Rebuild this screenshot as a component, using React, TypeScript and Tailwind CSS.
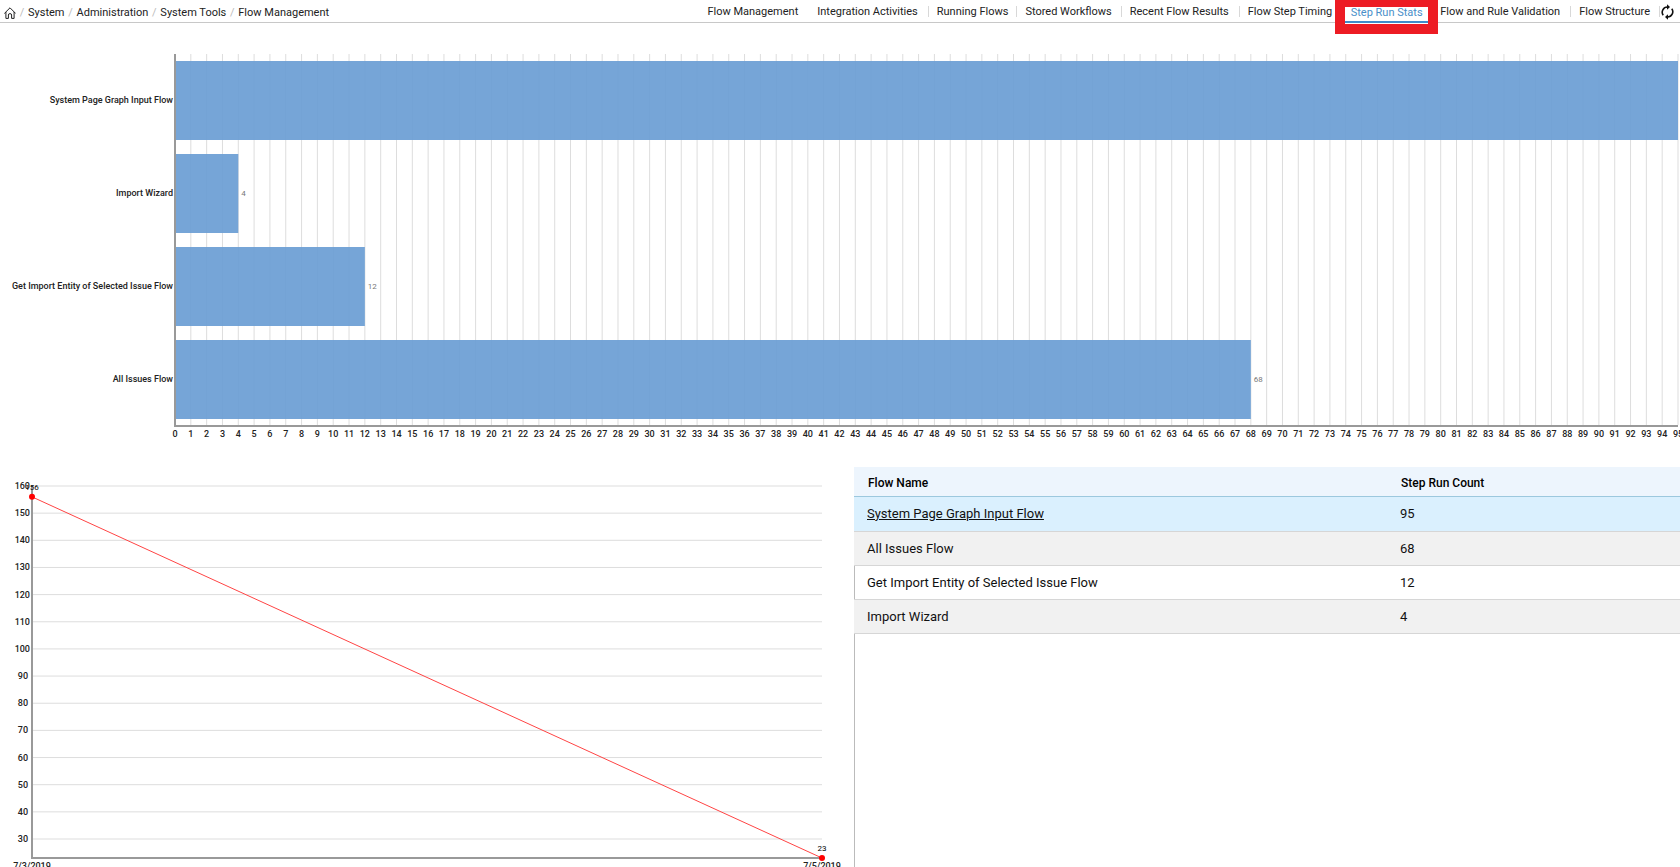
const crumbs = ['System', 'Administration', 'System Tools', 'Flow Management']

const tabs = [
  { label: 'Flow Management', style: 'mr-[19px]' },
  { label: 'Integration Activities', style: 'border-r pr-[10px]' },
  { label: 'Running Flows', style: 'border-r px-2' },
  { label: 'Stored Workflows', style: 'border-r pl-2 pr-[9px]' },
  { label: 'Recent Flow Results', style: 'border-r pl-2 pr-[10px]' },
  { label: 'Flow Step Timing', style: 'pl-2 pr-[2px]' },
  { label: 'Step Run Stats', style: '' },
  { label: 'Flow and Rule Validation', style: 'border-r pr-[10px]' },
  { label: 'Flow Structure', style: 'border-r pl-2 pr-[9px]' },
]

const bars = [
  { name: 'System Page Graph Input Flow', count: 95 },
  { name: 'Import Wizard', count: 4 },
  { name: 'Get Import Entity of Selected Issue Flow', count: 12 },
  { name: 'All Issues Flow', count: 68 },
]

const rows = [
  { name: 'System Page Graph Input Flow', count: 95 },
  { name: 'All Issues Flow', count: 68 },
  { name: 'Get Import Entity of Selected Issue Flow', count: 12 },
  { name: 'Import Wizard', count: 4 },
]

const MAX_COUNT = 95
const BAR_STEP = 93
const BAR_HEIGHT = 79

function HomeIcon() {
  return (
    <svg
      width="12"
      height="12"
      viewBox="0 0 12 12"
      fill="none"
      stroke="#222"
      strokeWidth="1"
      strokeLinejoin="round"
      strokeLinecap="round"
      aria-hidden="true"
    >
      <path d="M0.6 6.2 L6 0.8 L11.4 6.2 M1.9 5.4 V11.4 H4.4 V8 Q4.4 6.6 6 6.6 Q7.6 6.6 7.6 8 V11.4 H10.1 V5.4" />
    </svg>
  )
}

function RefreshIcon() {
  return (
    <svg width="13" height="16" viewBox="0 0 13 16" fill="none" stroke="#111" strokeWidth="1.6" aria-hidden="true">
      <path d="M2.2 11.2 A5.2 5.2 0 0 1 6.5 3" />
      <path d="M10.8 4.8 A5.2 5.2 0 0 1 6.5 13" />
      <path d="M6 0.2 L9 3 L6 5.8 Z" fill="#111" stroke="none" />
      <path d="M7 10.2 L4 13 L7 15.8 Z" fill="#111" stroke="none" />
    </svg>
  )
}

function TopBar() {
  return (
    <header className="flex h-[23px] items-start justify-between border-b border-[#c8c8c8] pr-[6px] pl-1 text-[11px] leading-4 text-[#222]">
      <nav aria-label="Breadcrumb" className="flex h-[25px] items-center">
        <a href="#home" aria-label="Home">
          <HomeIcon />
        </a>
        {crumbs.map((crumb) => (
          <span key={crumb} className="flex">
            <span className="w-3 text-center text-[#bbb]">/</span>
            <a href="#crumb">{crumb}</a>
          </span>
        ))}
      </nav>
      <nav aria-label="Pages" className="flex items-start">
        {tabs.map((tab) =>
          tab.label === 'Step Run Stats' ? (
            <div key={tab.label} className="relative z-10 mr-[2px] ml-px h-[22px] w-[103px]">
              <div className="absolute top-0 left-0 h-[34px] w-[103px] border-x-10 border-t-7 border-b-10 border-[#ed1c24] bg-white">
                <a
                  href="#tab"
                  aria-current="page"
                  className="flex h-4 items-start justify-center border-b-2 border-[#3f8ccb] leading-[12px] text-[#4a8fc9]"
                >
                  {tab.label}
                </a>
              </div>
            </div>
          ) : (
            <a
              key={tab.label}
              href="#tab"
              className={`mt-[6px] flex h-[11px] items-center border-[#d8d8d8] leading-[13px] ${tab.style}`}
            >
              {tab.label}
            </a>
          ),
        )}
        <button type="button" aria-label="Refresh" className="mt-1 ml-px">
          <RefreshIcon />
        </button>
      </nav>
    </header>
  )
}

function BarChart() {
  const pct = (n: number) => `${(n / MAX_COUNT) * 100}%`
  const ticks = Array.from({ length: MAX_COUNT + 1 }, (_, i) => i)

  return (
    <section aria-label="Step runs by flow" className="mt-[31px] h-[413px] pr-[2px] pl-[175px]">
      <svg width="100%" height="390" className="block overflow-visible">
        {ticks.map((n) => (
          <line key={n} x1={pct(n)} x2={pct(n)} y1="0" y2="371" stroke="#ddd" />
        ))}
        {bars.map((bar, i) => (
          <g key={bar.name}>
            <rect
              x="0"
              y={7 + i * BAR_STEP}
              width={pct(bar.count)}
              height={BAR_HEIGHT}
              fill="#6a9dd4"
              fillOpacity="0.92"
            />
            <text x="-2" y={49 + i * BAR_STEP} textAnchor="end" className="fill-[#222] text-[9px] font-medium">
              {bar.name}
            </text>
            {bar.count < MAX_COUNT && (
              <text x={pct(bar.count)} dx="3" y={49 + i * BAR_STEP} className="fill-[#777] text-[8px]">
                {bar.count}
              </text>
            )}
          </g>
        ))}
        <line x1="0" x2="0" y1="0" y2="372" stroke="#999" strokeWidth="2" />
        <line x1="-1" x2="100%" y1="372" y2="372" stroke="#999" strokeWidth="2" />
        {ticks.map((n) => (
          <text key={n} x={pct(n)} y="383" textAnchor="middle" className="fill-[#222] text-[9px] font-medium">
            {n}
          </text>
        ))}
      </svg>
    </section>
  )
}

function LineChart() {
  const yOf = (n: number) => 19 + ((160 - n) * 353) / 130
  const ticks = Array.from({ length: 14 }, (_, i) => 160 - i * 10)

  return (
    <section aria-label="Step runs by day" className="min-w-0 flex-1 pr-8 pl-8">
      <svg width="100%" height="400" className="block overflow-visible">
        {ticks.map((n) => (
          <g key={n}>
            <line x1="0" x2="100%" y1={yOf(n)} y2={yOf(n)} stroke="#ddd" />
            <text
              x={n < 100 ? -4 : -2}
              y={yOf(n) + 3}
              textAnchor="end"
              className="fill-[#222] text-[9px] font-medium"
            >
              {n}
            </text>
          </g>
        ))}
        <line x1="0" x2="0" y1={yOf(160)} y2={yOf(23)} stroke="#999" strokeWidth="2" />
        <line x1="-1" x2="100%" y1={yOf(23)} y2={yOf(23)} stroke="#999" strokeWidth="2" />
        <line x1="0" x2="100%" y1={yOf(156)} y2={yOf(23)} stroke="#f44" />
        <circle cx="0" cy={yOf(156)} r="3" fill="red" />
        <circle cx="100%" cy={yOf(23)} r="3" fill="red" />
        <text x="0" y={yOf(156) - 7} textAnchor="middle" className="fill-black text-[8px]">
          156
        </text>
        <text x="100%" y={yOf(23) - 7} textAnchor="middle" className="fill-black text-[8px]">
          23
        </text>
        <text x="0" y="402" textAnchor="middle" className="fill-[#222] text-[9px] font-medium">
          7/3/2019
        </text>
        <text x="100%" y="402" textAnchor="middle" className="fill-[#222] text-[9px] font-medium">
          7/5/2019
        </text>
      </svg>
    </section>
  )
}

function RunTable() {
  return (
    <section className="min-h-[400px] w-[826px] border-l border-[#bbb]">
      <table className="-ml-px w-[calc(100%+1px)] table-fixed border-collapse text-left text-[13px] leading-4 text-[#111]">
        <colgroup>
          <col className="w-[533px]" />
          <col />
        </colgroup>
        <thead>
          <tr className="h-[29px] border-b border-[#9cc8de] bg-[#edf5fd] text-[12px] text-black">
            <th className="pt-[3px] pb-0 pl-[14px] font-medium">Flow Name</th>
            <th className="pt-[3px] pb-0 pl-[14px] font-medium">Step Run Count</th>
          </tr>
        </thead>
        <tbody>
          {rows.map((row, i) => (
            <tr
              key={row.name}
              className={
                i === 0
                  ? 'h-[35px] border-b border-[#d6d6d6] bg-[#daf0fe]'
                  : i % 2
                    ? 'h-[34px] border-b border-[#d6d6d6] bg-[#f1f1f1] [&>td]:pt-[2px]'
                    : 'h-[34px] border-b border-[#d6d6d6] [&>td]:pt-[2px]'
              }
            >
              <td className="py-0 pl-[13px]">
                {i === 0 ? (
                  <a href="#flow" className="underline">
                    {row.name}
                  </a>
                ) : (
                  row.name
                )}
              </td>
              <td className="py-0 pl-[13px]">{row.count}</td>
            </tr>
          ))}
        </tbody>
      </table>
    </section>
  )
}

export default function App() {
  return (
    <main className="h-screen overflow-hidden bg-white font-['Roboto',sans-serif]">
      <TopBar />
      <BarChart />
      <div className="flex">
        <LineChart />
        <RunTable />
      </div>
    </main>
  )
}
